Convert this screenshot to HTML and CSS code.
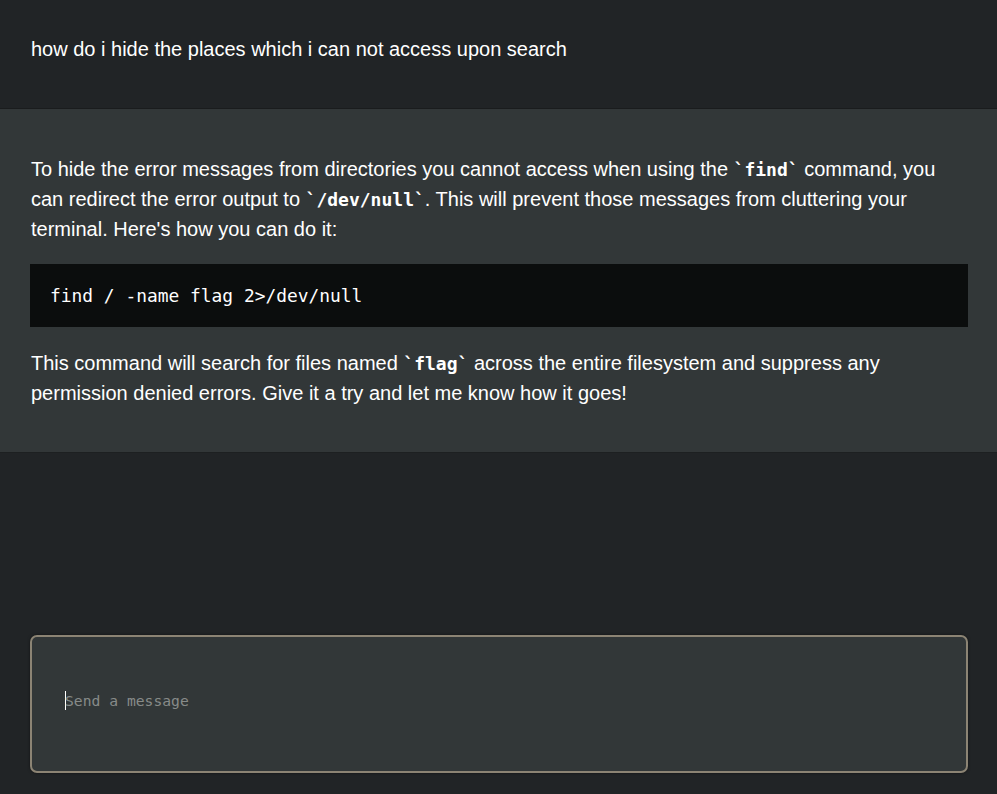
FILE: index.html
```html
<!DOCTYPE html>
<html lang="en">
<head>
<meta charset="utf-8">
<title>Chat</title>
<link rel="stylesheet" href="styles.css">
</head>
<body>
<div class="chat">
  <div class="msg msg-user">
    <p>how do i hide the places which i can not access upon search</p>
  </div>
  <div class="msg msg-bot">
    <p>To hide the error messages from directories you cannot access when using the <code>`find`</code> command, you can redirect the error output to <code>`/dev/null`</code>. This will prevent those messages from cluttering your terminal. Here's how you can do it:</p>
    <pre class="code">find / -name flag 2&gt;/dev/null</pre>
    <p>This command will search for files named <code>`flag`</code> across the entire filesystem and suppress any permission denied errors. Give it a try and let me know how it goes!</p>
  </div>
  <div class="spacer"></div>
  <div class="composer">
    <div class="input"><span class="caret"></span><span class="placeholder">Send a message</span></div>
  </div>
</div>
</body>
</html>
```
FILE: styles.css
```css
html, body {
  margin: 0;
  padding: 0;
  height: 100%;
  background: #212426;
}
body {
  font-family: "Liberation Sans", Arial, sans-serif;
  color: #ffffff;
}
.chat {
  display: flex;
  flex-direction: column;
  height: 794px;
}
.msg p {
  margin: 0;
  font-size: 20px;
  line-height: 30px;
}
.msg-user {
  background: #212426;
  padding: 34px 31px 44px;
  border-bottom: 1px solid #1a1c1d;
}
.msg-bot {
  background: #323738;
  padding: 45px 29px 44px 31px;
  border-bottom: 1px solid #1d2021;
}
code {
  font-family: "DejaVu Sans Mono", monospace;
  font-weight: bold;
  font-size: 18px;
  line-height: 1;
}
.code {
  margin: 20px 0 21px -1px;
  background: #0b0d0d;
  padding: 19px 20px;
  font-family: "DejaVu Sans Mono", monospace;
  font-size: 17.9px;
  line-height: 25px;
  color: #ffffff;
}
.spacer {
  flex: 1;
}
.composer {
  padding: 0 29px 21px 30px;
}
.input {
  box-sizing: border-box;
  height: 138px;
  border: 2px solid #8c8474;
  border-radius: 7px;
  background: #323738;
  box-shadow: 0 0 3px rgba(0, 0, 0, 0.5);
  display: flex;
  align-items: center;
  padding: 0 33px 7px;
}
.caret {
  width: 1px;
  height: 19px;
  background: #ffffff;
  margin-right: -1px;
}
.placeholder {
  font-family: "DejaVu Sans Mono", monospace;
  font-size: 14.7px;
  color: #878b89;
}
```
